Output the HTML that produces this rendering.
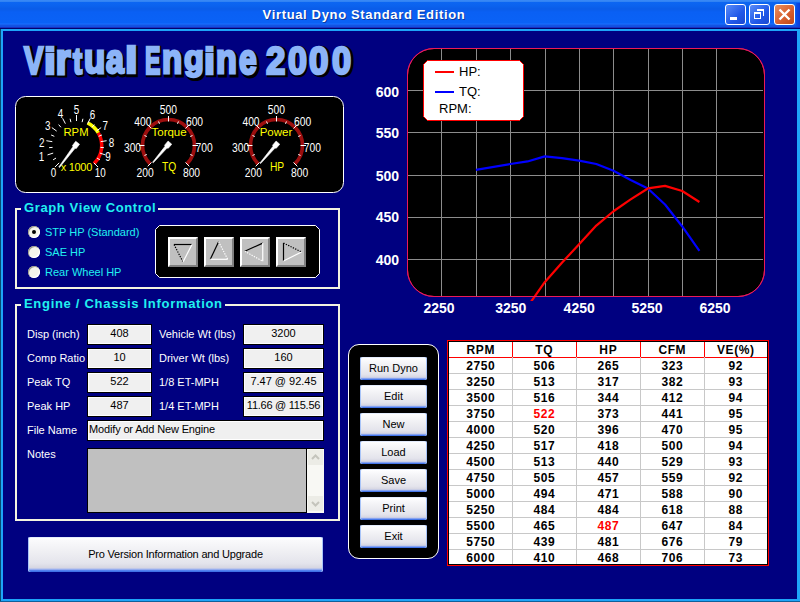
<!DOCTYPE html>
<html><head><meta charset="utf-8">
<style>
*{margin:0;padding:0;box-sizing:border-box}
html,body{width:800px;height:602px;overflow:hidden;background:#000080;font-family:"Liberation Sans",sans-serif}
.a{position:absolute}
#title{left:0;top:0;width:800px;height:29px;background:linear-gradient(#3a8af6 0,#2e80f2 2px,#0c66f2 2px,#0b62ee 6px,#0a5ce8 9px,#0a60f4 12px,#0a62f6 23px,#1a70ff 24px,#1454e4 25px,#1050e0 27px,#1a30c0 27px,#1a30c0 28px,#000070 28px)}
#ttext{left:0;top:7px;width:728px;text-align:center;color:#fff;font-weight:bold;font-size:13px;letter-spacing:0.65px;text-shadow:1px 1px 0 #0a3aa0}
.tb{width:21px;height:21px;top:4px;border:1px solid #fff;border-radius:3px;background:linear-gradient(135deg,#5a8cf8,#2058e8 60%,#1a48d0)}
.frame{background:#1ea4f8}
.lbl{position:absolute;color:#fff;font-size:11px;line-height:13px;white-space:nowrap}
.box{position:absolute;background:#f0f0f0;border:1px solid #000;box-shadow:inset 0 0 0 1px #fff;height:21px;font-size:11px;line-height:17px;text-align:center;color:#000;white-space:nowrap}
.gb{position:absolute;border:2px solid #f4f4e0}
.gbt{position:absolute;background:#000080;color:#20f0f0;font-weight:bold;font-size:13px;letter-spacing:0.62px;line-height:15px;padding:0 2px 0 3px;white-space:nowrap}
.radio{position:absolute;width:12px;height:12px;border-radius:50%;background:#f4f4ec;box-shadow:inset 1px 1px 0 #9a9a88, inset -1px -1px 0 #fff}
.rlbl{position:absolute;color:#20f0f0;font-size:11px;line-height:13px;white-space:nowrap}
.xb{position:absolute;width:67px;height:23px;border-radius:2px;background:linear-gradient(#c8d8fa 0,#ffffff 1px,#fafafc 3px,#eeeef2 45%,#e4e4ec 75%,#d6d6e2 88%,#a8b8f0 92%,#4c7ef0 96%,#3a6ae0 100%);box-shadow:inset 1px 0 0 #a8c4f8, inset -1px 0 0 #a8c4f8;font-size:11px;line-height:23px;text-align:center;color:#000}
.ab{position:absolute;top:237px;width:30px;height:30px;background:#c0c0c0;border-top:2px solid #fff;border-left:2px solid #fff;border-right:2px solid #808080;border-bottom:2px solid #808080}
.logo{font-size:38px;font-weight:bold;color:#8cb4f8;white-space:nowrap;-webkit-text-stroke:2.6px #8cb4f8;transform-origin:0 0;line-height:44px}
.sh{color:#000;-webkit-text-stroke:4.6px #000}
.al{position:absolute;color:#fff;font-weight:bold;font-size:14px;line-height:16px;white-space:nowrap}
.tc{position:absolute;height:16px;text-align:center;font-weight:bold;font-size:12px;letter-spacing:0.6px;text-indent:0.6px;line-height:18px;color:#000}
</style></head><body>
<!-- title bar -->
<div class="a" id="title"></div>
<div class="a" style="left:796px;top:3px;width:4px;height:24px;background:linear-gradient(90deg,#0a50e8,#0a3cd8)"></div>
<div class="a" id="ttext">Virtual Dyno Standard Edition</div>
<div class="a tb" style="left:725px"><div class="a" style="left:4px;top:12px;width:7px;height:3px;background:#fff"></div></div>
<div class="a tb" style="left:749px"><svg class="a" style="left:0;top:0" width="19" height="19"><path d="M7,4 H14 V11 H13 V6 H7 Z" fill="#fff"/><path d="M4,7 H11 V14 H4 Z M5,9 V13 H10 V9 Z" fill="#fff" fill-rule="evenodd"/></svg></div>
<div class="a tb" style="left:774px;background:linear-gradient(135deg,#e89060,#d86030 55%,#c04818)"><svg class="a" style="left:0;top:0" width="19" height="19"><path d="M4.5,4.5 L14.5,14.5 M14.5,4.5 L4.5,14.5" stroke="#fff" stroke-width="2.4"/></svg></div>
<!-- frame -->
<div class="a frame" style="left:1px;top:29px;width:798px;height:2px"></div>
<div class="a frame" style="left:1px;top:29px;width:2px;height:572px"></div>
<div class="a frame" style="left:797px;top:29px;width:3px;height:572px"></div>
<div class="a frame" style="left:1px;top:599px;width:799px;height:2px"></div>
<div class="a" style="left:0;top:29px;width:1px;height:573px;background:#0a4a70"></div>
<div class="a" style="left:0;top:601px;width:800px;height:1px;background:#10609a"></div>

<!-- logo -->
<div class="a logo sh" style="left:25.66px;top:39.26px;transform:scale(0.763,1.021)">V</div>
<div class="a logo sh" style="left:45.50px;top:41.32px;transform:scale(1.125,0.963)">i</div>
<div class="a logo sh" style="left:57.25px;top:36.09px;transform:scale(1.0,1.109)">r</div>
<div class="a logo sh" style="left:74.43px;top:40.19px;transform:scale(0.727,0.989)">t</div>
<div class="a logo sh" style="left:85.69px;top:37.71px;transform:scale(0.914,1.061)">u</div>
<div class="a logo sh" style="left:107.20px;top:37.71px;transform:scale(0.843,1.061)">a</div>
<div class="a logo sh" style="left:126.12px;top:40.92px;transform:scale(1.188,0.972)">l</div>
<div class="a logo sh" style="left:146.28px;top:39.26px;transform:scale(0.608,1.021)">E</div>
<div class="a logo sh" style="left:163.53px;top:36.87px;transform:scale(0.868,1.087)">n</div>
<div class="a logo sh" style="left:185.64px;top:39.76px;transform:scale(0.857,0.903)">g</div>
<div class="a logo sh" style="left:205.82px;top:41.42px;transform:scale(1.037,0.963)">i</div>
<div class="a logo sh" style="left:217.90px;top:37.60px;transform:scale(0.895,1.07)">n</div>
<div class="a logo sh" style="left:240.70px;top:36.74px;transform:scale(0.836,1.104)">e</div>
<div class="a logo sh" style="left:267.90px;top:39.11px;transform:scale(0.914,1.028)">2</div>
<div class="a logo sh" style="left:289.30px;top:39.11px;transform:scale(0.895,1.028)">0</div>
<div class="a logo sh" style="left:310.70px;top:39.11px;transform:scale(0.919,1.028)">0</div>
<div class="a logo sh" style="left:333.50px;top:39.38px;transform:scale(0.905,1.017)">0</div>
<div class="a logo" style="left:24.16px;top:37.76px;transform:scale(0.763,1.021)">V</div>
<div class="a logo" style="left:44.00px;top:39.82px;transform:scale(1.125,0.963)">i</div>
<div class="a logo" style="left:55.75px;top:34.59px;transform:scale(1.0,1.109)">r</div>
<div class="a logo" style="left:72.93px;top:38.69px;transform:scale(0.727,0.989)">t</div>
<div class="a logo" style="left:84.19px;top:36.21px;transform:scale(0.914,1.061)">u</div>
<div class="a logo" style="left:105.70px;top:36.21px;transform:scale(0.843,1.061)">a</div>
<div class="a logo" style="left:124.62px;top:39.42px;transform:scale(1.188,0.972)">l</div>
<div class="a logo" style="left:144.78px;top:37.76px;transform:scale(0.608,1.021)">E</div>
<div class="a logo" style="left:162.03px;top:35.37px;transform:scale(0.868,1.087)">n</div>
<div class="a logo" style="left:184.14px;top:38.26px;transform:scale(0.857,0.903)">g</div>
<div class="a logo" style="left:204.32px;top:39.92px;transform:scale(1.037,0.963)">i</div>
<div class="a logo" style="left:216.40px;top:36.10px;transform:scale(0.895,1.07)">n</div>
<div class="a logo" style="left:239.20px;top:35.24px;transform:scale(0.836,1.104)">e</div>
<div class="a logo" style="left:266.40px;top:37.61px;transform:scale(0.914,1.028)">2</div>
<div class="a logo" style="left:287.80px;top:37.61px;transform:scale(0.895,1.028)">0</div>
<div class="a logo" style="left:309.20px;top:37.61px;transform:scale(0.919,1.028)">0</div>
<div class="a logo" style="left:332.00px;top:37.88px;transform:scale(0.905,1.017)">0</div>

<!-- gauges panel -->
<svg class="a" style="left:0;top:0" width="350" height="200" font-family="Liberation Sans, sans-serif">
<rect x="15.5" y="96.5" width="328" height="96" rx="10" ry="10" fill="#000" stroke="#fff" stroke-width="1"/>
<path d="M87.55,122.85 A25.2,25.2 0 0 1 98.32,132.90" stroke="#ffff00" stroke-width="3.5" fill="none"/>
<path d="M98.32,132.90 A25.2,25.2 0 0 1 94.01,163.63" stroke="#ff0000" stroke-width="3.5" fill="none"/>
<line x1="59.18" y1="162.82" x2="54.93" y2="167.07" stroke="#fff" stroke-width="1" />
<line x1="56.04" y1="158.04" x2="53.05" y2="159.87" stroke="#fff" stroke-width="1" />
<line x1="53.20" y1="153.07" x2="47.49" y2="154.93" stroke="#fff" stroke-width="1" />
<line x1="52.57" y1="147.38" x2="49.08" y2="147.66" stroke="#fff" stroke-width="1" />
<line x1="52.30" y1="141.67" x2="46.38" y2="140.73" stroke="#fff" stroke-width="1" />
<line x1="54.33" y1="136.32" x2="51.09" y2="134.98" stroke="#fff" stroke-width="1" />
<line x1="56.68" y1="131.10" x2="51.82" y2="127.57" stroke="#fff" stroke-width="1" />
<line x1="60.91" y1="127.25" x2="58.64" y2="124.59" stroke="#fff" stroke-width="1" />
<line x1="65.38" y1="123.67" x2="62.65" y2="118.32" stroke="#fff" stroke-width="1" />
<line x1="70.90" y1="122.16" x2="70.08" y2="118.76" stroke="#fff" stroke-width="1" />
<line x1="76.50" y1="121.00" x2="76.50" y2="115.00" stroke="#fff" stroke-width="1" />
<line x1="82.10" y1="122.16" x2="82.92" y2="118.76" stroke="#fff" stroke-width="1" />
<line x1="87.62" y1="123.67" x2="90.35" y2="118.32" stroke="#fff" stroke-width="1" />
<line x1="92.09" y1="127.25" x2="94.36" y2="124.59" stroke="#fff" stroke-width="1" />
<line x1="96.32" y1="131.10" x2="101.18" y2="127.57" stroke="#fff" stroke-width="1" />
<line x1="98.67" y1="136.32" x2="101.91" y2="134.98" stroke="#fff" stroke-width="1" />
<line x1="100.70" y1="141.67" x2="106.62" y2="140.73" stroke="#fff" stroke-width="1" />
<line x1="100.43" y1="147.38" x2="103.92" y2="147.66" stroke="#fff" stroke-width="1" />
<line x1="99.80" y1="153.07" x2="105.51" y2="154.93" stroke="#fff" stroke-width="1" />
<line x1="96.96" y1="158.04" x2="99.95" y2="159.87" stroke="#fff" stroke-width="1" />
<line x1="93.82" y1="162.82" x2="98.07" y2="167.07" stroke="#fff" stroke-width="1" />
<text transform="translate(53.50,176.50) scale(0.82,1)" fill="#fff" font-size="12" text-anchor="middle" font-weight="normal" >0</text>
<text transform="translate(41.50,161.20) scale(0.82,1)" fill="#fff" font-size="12" text-anchor="middle" font-weight="normal" >1</text>
<text transform="translate(41.70,146.60) scale(0.82,1)" fill="#fff" font-size="12" text-anchor="middle" font-weight="normal" >2</text>
<text transform="translate(47.70,129.70) scale(0.82,1)" fill="#fff" font-size="12" text-anchor="middle" font-weight="normal" >3</text>
<text transform="translate(60.40,118.20) scale(0.82,1)" fill="#fff" font-size="12" text-anchor="middle" font-weight="normal" >4</text>
<text transform="translate(76.50,113.70) scale(0.82,1)" fill="#fff" font-size="12" text-anchor="middle" font-weight="normal" >5</text>
<text transform="translate(92.60,118.50) scale(0.82,1)" fill="#fff" font-size="12" text-anchor="middle" font-weight="normal" >6</text>
<text transform="translate(105.30,129.50) scale(0.82,1)" fill="#fff" font-size="12" text-anchor="middle" font-weight="normal" >7</text>
<text transform="translate(111.60,146.60) scale(0.82,1)" fill="#fff" font-size="12" text-anchor="middle" font-weight="normal" >8</text>
<text transform="translate(108.00,161.20) scale(0.82,1)" fill="#fff" font-size="12" text-anchor="middle" font-weight="normal" >9</text>
<text transform="translate(100.30,176.50) scale(0.82,1)" fill="#fff" font-size="12" text-anchor="middle" font-weight="normal" >10</text>
<text transform="translate(76.00,135.80) scale(0.98,1)" fill="#ffff00" font-size="11.5" text-anchor="middle" font-weight="normal" >RPM</text>
<text x="76.4" y="170.7" fill="#ffff00" font-size="11" text-anchor="middle" font-weight="normal" letter-spacing="-0.3">x 1000</text>
<path d="M75.71,141.30 L72.46,145.61 L72.93,146.72 L58.79,166.99 L59.51,167.53 L75.09,148.35 L76.29,148.50 L79.54,144.19Z" fill="#fff" stroke="#fff" stroke-width="0.6" stroke-linejoin="round"/>
<path d="M150.12,163.88 A26,26 0 1 1 186.88,163.88" stroke="#9c0e0e" stroke-width="3.6" fill="none"/>
<line x1="151.53" y1="162.47" x2="147.64" y2="166.36" stroke="#fff" stroke-width="1" />
<line x1="146.79" y1="154.49" x2="144.48" y2="155.45" stroke="#fff" stroke-width="1" />
<line x1="144.50" y1="145.50" x2="139.00" y2="145.50" stroke="#fff" stroke-width="1" />
<line x1="146.79" y1="136.51" x2="144.48" y2="135.55" stroke="#fff" stroke-width="1" />
<line x1="151.53" y1="128.53" x2="147.64" y2="124.64" stroke="#fff" stroke-width="1" />
<line x1="159.51" y1="123.79" x2="158.55" y2="121.48" stroke="#fff" stroke-width="1" />
<line x1="168.50" y1="121.50" x2="168.50" y2="116.00" stroke="#fff" stroke-width="1" />
<line x1="177.49" y1="123.79" x2="178.45" y2="121.48" stroke="#fff" stroke-width="1" />
<line x1="185.47" y1="128.53" x2="189.36" y2="124.64" stroke="#fff" stroke-width="1" />
<line x1="190.21" y1="136.51" x2="192.52" y2="135.55" stroke="#fff" stroke-width="1" />
<line x1="192.50" y1="145.50" x2="198.00" y2="145.50" stroke="#fff" stroke-width="1" />
<line x1="190.21" y1="154.49" x2="192.52" y2="155.45" stroke="#fff" stroke-width="1" />
<line x1="185.47" y1="162.47" x2="189.36" y2="166.36" stroke="#fff" stroke-width="1" />
<text transform="translate(145.20,177.00) scale(0.86,1)" fill="#fff" font-size="12" text-anchor="middle" font-weight="normal" >200</text>
<text transform="translate(132.50,152.00) scale(0.86,1)" fill="#fff" font-size="12" text-anchor="middle" font-weight="normal" >300</text>
<text transform="translate(142.90,126.20) scale(0.86,1)" fill="#fff" font-size="12" text-anchor="middle" font-weight="normal" >400</text>
<text transform="translate(168.30,113.60) scale(0.86,1)" fill="#fff" font-size="12" text-anchor="middle" font-weight="normal" >500</text>
<text transform="translate(194.50,126.20) scale(0.86,1)" fill="#fff" font-size="12" text-anchor="middle" font-weight="normal" >600</text>
<text transform="translate(204.20,152.00) scale(0.86,1)" fill="#fff" font-size="12" text-anchor="middle" font-weight="normal" >700</text>
<text transform="translate(191.50,177.00) scale(0.86,1)" fill="#fff" font-size="12" text-anchor="middle" font-weight="normal" >800</text>
<text x="169.1" y="135.9" fill="#ffff00" font-size="11.5" text-anchor="middle" font-weight="normal" >Torque</text>
<text transform="translate(169.00,171.00) scale(0.82,1)" fill="#ffff00" font-size="12.5" text-anchor="middle" font-weight="normal" >TQ</text>
<path d="M168.10,141.07 L164.60,145.17 L165.01,146.31 L152.57,162.26 L153.26,162.84 L167.06,148.07 L168.25,148.29 L171.75,144.19Z" fill="#fff" stroke="#fff" stroke-width="0.6" stroke-linejoin="round"/>
<path d="M258.12,163.88 A26,26 0 1 1 294.88,163.88" stroke="#9c0e0e" stroke-width="3.6" fill="none"/>
<line x1="259.53" y1="162.47" x2="255.64" y2="166.36" stroke="#fff" stroke-width="1" />
<line x1="254.79" y1="154.49" x2="252.48" y2="155.45" stroke="#fff" stroke-width="1" />
<line x1="252.50" y1="145.50" x2="247.00" y2="145.50" stroke="#fff" stroke-width="1" />
<line x1="254.79" y1="136.51" x2="252.48" y2="135.55" stroke="#fff" stroke-width="1" />
<line x1="259.53" y1="128.53" x2="255.64" y2="124.64" stroke="#fff" stroke-width="1" />
<line x1="267.51" y1="123.79" x2="266.55" y2="121.48" stroke="#fff" stroke-width="1" />
<line x1="276.50" y1="121.50" x2="276.50" y2="116.00" stroke="#fff" stroke-width="1" />
<line x1="285.49" y1="123.79" x2="286.45" y2="121.48" stroke="#fff" stroke-width="1" />
<line x1="293.47" y1="128.53" x2="297.36" y2="124.64" stroke="#fff" stroke-width="1" />
<line x1="298.21" y1="136.51" x2="300.52" y2="135.55" stroke="#fff" stroke-width="1" />
<line x1="300.50" y1="145.50" x2="306.00" y2="145.50" stroke="#fff" stroke-width="1" />
<line x1="298.21" y1="154.49" x2="300.52" y2="155.45" stroke="#fff" stroke-width="1" />
<line x1="293.47" y1="162.47" x2="297.36" y2="166.36" stroke="#fff" stroke-width="1" />
<text transform="translate(253.30,177.00) scale(0.86,1)" fill="#fff" font-size="12" text-anchor="middle" font-weight="normal" >200</text>
<text transform="translate(240.60,152.00) scale(0.86,1)" fill="#fff" font-size="12" text-anchor="middle" font-weight="normal" >300</text>
<text transform="translate(251.00,126.20) scale(0.86,1)" fill="#fff" font-size="12" text-anchor="middle" font-weight="normal" >400</text>
<text transform="translate(276.40,113.60) scale(0.86,1)" fill="#fff" font-size="12" text-anchor="middle" font-weight="normal" >500</text>
<text transform="translate(302.60,126.20) scale(0.86,1)" fill="#fff" font-size="12" text-anchor="middle" font-weight="normal" >600</text>
<text transform="translate(312.30,152.00) scale(0.86,1)" fill="#fff" font-size="12" text-anchor="middle" font-weight="normal" >700</text>
<text transform="translate(299.60,177.00) scale(0.86,1)" fill="#fff" font-size="12" text-anchor="middle" font-weight="normal" >800</text>
<text x="276.0" y="135.9" fill="#ffff00" font-size="11.5" text-anchor="middle" font-weight="normal" >Power</text>
<text transform="translate(277.00,171.00) scale(0.82,1)" fill="#ffff00" font-size="12.5" text-anchor="middle" font-weight="normal" >HP</text>
<path d="M276.10,141.07 L272.60,145.17 L273.01,146.31 L259.92,163.02 L260.61,163.60 L275.06,148.07 L276.25,148.29 L279.75,144.19Z" fill="#fff" stroke="#fff" stroke-width="0.6" stroke-linejoin="round"/>
</svg>

<!-- Graph view control -->
<div class="gb" style="left:15px;top:208px;width:325px;height:81px"></div>
<div class="gbt" style="left:21px;top:200px">Graph View Control</div>
<div class="radio" style="left:28px;top:226px"><div class="a" style="left:4px;top:4px;width:4px;height:4px;border-radius:50%;background:#000"></div></div>
<div class="radio" style="left:28px;top:246px"></div>
<div class="radio" style="left:28px;top:266px"></div>
<div class="rlbl" style="left:45px;top:226px">STP HP (Standard)</div>
<div class="rlbl" style="left:45px;top:246px">SAE HP</div>
<div class="rlbl" style="left:45px;top:266px">Rear Wheel HP</div>
<svg class="a" style="left:150px;top:220px" width="180" height="65">
<path d="M9.5,5.5 L165.5,5.5 L169.5,9.5 L169.5,53.5 L165.5,57.5 L9.5,57.5 L5.5,53.5 L5.5,9.5 Z" fill="#000" stroke="#fff"/>
</svg>
<div class="ab" style="left:168px"></div>
<div class="ab" style="left:204px"></div>
<div class="ab" style="left:240px"></div>
<div class="ab" style="left:276px"></div>
<svg class="a" style="left:150px;top:220px" width="180" height="65">
<path d="M24,24.5 L42,24.5" stroke="#000" stroke-width="1.2"/>
<path d="M24,24.5 L33,42" stroke="#000" stroke-width="1.2" stroke-dasharray="1.3,1.3"/>
<path d="M42,24.5 L33,42" stroke="#fff" stroke-width="1.2"/>
<path d="M68.6,21.7 L60.3,39.3" stroke="#000" stroke-width="1.2"/>
<path d="M60.3,39.3 L77.7,39.3" stroke="#fff" stroke-width="1.2"/>
<path d="M68.6,21.7 L77.7,39.3" stroke="#fff" stroke-width="1.2" stroke-dasharray="1.3,1.3"/>
<path d="M94.75,31.25 L112.75,23.1" stroke="#000" stroke-width="1.2"/>
<path d="M112.75,23.1 L112.75,41.25" stroke="#fff" stroke-width="1.2"/>
<path d="M94.75,31.25 L112.75,41.25" stroke="#fff" stroke-width="1.2" stroke-dasharray="1.3,1.3"/>
<path d="M133.5,23 L133.5,41" stroke="#000" stroke-width="1.2"/>
<path d="M133.5,23 L151.5,32" stroke="#000" stroke-width="1.2" stroke-dasharray="1.3,1.3"/>
<path d="M133.5,41 L151.5,32" stroke="#fff" stroke-width="1.2"/>
</svg>

<!-- Engine / chassis -->
<div class="gb" style="left:15px;top:304px;width:325px;height:217px"></div>
<div class="gbt" style="left:21px;top:296px;letter-spacing:0.7px">Engine / Chassis Information</div>
<div class="lbl" style="left:27px;top:328px">Disp (inch)</div>
<div class="lbl" style="left:27px;top:352px">Comp Ratio</div>
<div class="lbl" style="left:27px;top:376px">Peak TQ</div>
<div class="lbl" style="left:27px;top:400px">Peak HP</div>
<div class="lbl" style="left:159px;top:328px">Vehicle Wt (lbs)</div>
<div class="lbl" style="left:159px;top:352px">Driver Wt (lbs)</div>
<div class="lbl" style="left:159px;top:376px">1/8 ET-MPH</div>
<div class="lbl" style="left:159px;top:400px">1/4 ET-MPH</div>
<div class="box" style="left:87px;top:324px;width:65px">408</div>
<div class="box" style="left:87px;top:348px;width:65px">10</div>
<div class="box" style="left:87px;top:372px;width:65px">522</div>
<div class="box" style="left:87px;top:396px;width:65px">487</div>
<div class="box" style="left:243px;top:324px;width:81px">3200</div>
<div class="box" style="left:243px;top:348px;width:81px">160</div>
<div class="box" style="left:243px;top:372px;width:81px">7.47 @ 92.45</div>
<div class="box" style="left:243px;top:396px;width:81px;letter-spacing:-0.25px">11.66 @ 115.56</div>
<div class="lbl" style="left:27px;top:424px">File Name</div>
<div class="box" style="left:87px;top:420px;width:237px;text-align:left;padding-left:1px;letter-spacing:-0.15px">Modify or Add New Engine</div>
<div class="lbl" style="left:27px;top:448px">Notes</div>
<div class="a" style="left:87px;top:448px;width:220px;height:65px;border:1px solid #000;background:#c0c0c0"></div>
<div class="a" style="left:307px;top:448px;width:17px;height:1px;background:#000"></div>
<div class="a" style="left:307px;top:449px;width:17px;height:64px;background:#f8f8f4"></div>
<div class="a" style="left:308px;top:450px;width:15px;height:15px;background:#ecece6"></div>
<div class="a" style="left:308px;top:496px;width:15px;height:15px;background:#ecece6"></div>
<svg class="a" style="left:307px;top:449px" width="17" height="64"><path d="M5,10 L8.5,6.5 L12,10" stroke="#c4c4bc" stroke-width="2" fill="none"/><path d="M5,53 L8.5,56.5 L12,53" stroke="#c4c4bc" stroke-width="2" fill="none"/></svg>

<!-- Pro button -->
<div class="xb" style="left:28px;top:537px;width:295px;height:35px;line-height:35px;letter-spacing:-0.2px">Pro Version Information and Upgrade</div>

<!-- button panel -->
<div class="a" style="left:348px;top:344px;width:91px;height:215px;border:1px solid #fff;border-radius:11px;background:#000"></div>
<div class="xb" style="left:360px;top:357px">Run Dyno</div>
<div class="xb" style="left:360px;top:385px">Edit</div>
<div class="xb" style="left:360px;top:413px">New</div>
<div class="xb" style="left:360px;top:441px">Load</div>
<div class="xb" style="left:360px;top:469px">Save</div>
<div class="xb" style="left:360px;top:497px">Print</div>
<div class="xb" style="left:360px;top:525px">Exit</div>

<!-- table -->
<div class="a" style="left:447px;top:340px;width:322px;height:226px;border:1px solid #ff0000;background:#000"></div>
<div class="a" style="left:449px;top:342px;width:318px;height:222px;background:#fff"></div>
<div class="a" style="left:449px;top:357px;width:318px;height:1px;background:#ff0000"></div>
<div class="tc" style="left:449px;top:341px;width:63px">RPM</div>
<div class="tc" style="left:512px;top:341px;width:64px">TQ</div>
<div class="tc" style="left:576px;top:341px;width:64px">HP</div>
<div class="tc" style="left:640px;top:341px;width:64px">CFM</div>
<div class="tc" style="left:704px;top:341px;width:63px">VE(%)</div>
<div class="tc" style="left:449px;top:357px;width:63px">2750</div>
<div class="tc" style="left:512px;top:357px;width:64px">506</div>
<div class="tc" style="left:576px;top:357px;width:64px">265</div>
<div class="tc" style="left:640px;top:357px;width:64px">323</div>
<div class="tc" style="left:704px;top:357px;width:63px">92</div>
<div class="tc" style="left:449px;top:373px;width:63px">3250</div>
<div class="tc" style="left:512px;top:373px;width:64px">513</div>
<div class="tc" style="left:576px;top:373px;width:64px">317</div>
<div class="tc" style="left:640px;top:373px;width:64px">382</div>
<div class="tc" style="left:704px;top:373px;width:63px">93</div>
<div class="tc" style="left:449px;top:389px;width:63px">3500</div>
<div class="tc" style="left:512px;top:389px;width:64px">516</div>
<div class="tc" style="left:576px;top:389px;width:64px">344</div>
<div class="tc" style="left:640px;top:389px;width:64px">412</div>
<div class="tc" style="left:704px;top:389px;width:63px">94</div>
<div class="tc" style="left:449px;top:405px;width:63px">3750</div>
<div class="tc" style="left:512px;top:405px;width:64px;color:#ff0000">522</div>
<div class="tc" style="left:576px;top:405px;width:64px">373</div>
<div class="tc" style="left:640px;top:405px;width:64px">441</div>
<div class="tc" style="left:704px;top:405px;width:63px">95</div>
<div class="tc" style="left:449px;top:421px;width:63px">4000</div>
<div class="tc" style="left:512px;top:421px;width:64px">520</div>
<div class="tc" style="left:576px;top:421px;width:64px">396</div>
<div class="tc" style="left:640px;top:421px;width:64px">470</div>
<div class="tc" style="left:704px;top:421px;width:63px">95</div>
<div class="tc" style="left:449px;top:437px;width:63px">4250</div>
<div class="tc" style="left:512px;top:437px;width:64px">517</div>
<div class="tc" style="left:576px;top:437px;width:64px">418</div>
<div class="tc" style="left:640px;top:437px;width:64px">500</div>
<div class="tc" style="left:704px;top:437px;width:63px">94</div>
<div class="tc" style="left:449px;top:453px;width:63px">4500</div>
<div class="tc" style="left:512px;top:453px;width:64px">513</div>
<div class="tc" style="left:576px;top:453px;width:64px">440</div>
<div class="tc" style="left:640px;top:453px;width:64px">529</div>
<div class="tc" style="left:704px;top:453px;width:63px">93</div>
<div class="tc" style="left:449px;top:469px;width:63px">4750</div>
<div class="tc" style="left:512px;top:469px;width:64px">505</div>
<div class="tc" style="left:576px;top:469px;width:64px">457</div>
<div class="tc" style="left:640px;top:469px;width:64px">559</div>
<div class="tc" style="left:704px;top:469px;width:63px">92</div>
<div class="tc" style="left:449px;top:485px;width:63px">5000</div>
<div class="tc" style="left:512px;top:485px;width:64px">494</div>
<div class="tc" style="left:576px;top:485px;width:64px">471</div>
<div class="tc" style="left:640px;top:485px;width:64px">588</div>
<div class="tc" style="left:704px;top:485px;width:63px">90</div>
<div class="tc" style="left:449px;top:501px;width:63px">5250</div>
<div class="tc" style="left:512px;top:501px;width:64px">484</div>
<div class="tc" style="left:576px;top:501px;width:64px">484</div>
<div class="tc" style="left:640px;top:501px;width:64px">618</div>
<div class="tc" style="left:704px;top:501px;width:63px">88</div>
<div class="tc" style="left:449px;top:517px;width:63px">5500</div>
<div class="tc" style="left:512px;top:517px;width:64px">465</div>
<div class="tc" style="left:576px;top:517px;width:64px;color:#ff0000">487</div>
<div class="tc" style="left:640px;top:517px;width:64px">647</div>
<div class="tc" style="left:704px;top:517px;width:63px">84</div>
<div class="tc" style="left:449px;top:533px;width:63px">5750</div>
<div class="tc" style="left:512px;top:533px;width:64px">439</div>
<div class="tc" style="left:576px;top:533px;width:64px">481</div>
<div class="tc" style="left:640px;top:533px;width:64px">676</div>
<div class="tc" style="left:704px;top:533px;width:63px">79</div>
<div class="tc" style="left:449px;top:549px;width:63px">6000</div>
<div class="tc" style="left:512px;top:549px;width:64px">410</div>
<div class="tc" style="left:576px;top:549px;width:64px">468</div>
<div class="tc" style="left:640px;top:549px;width:64px">706</div>
<div class="tc" style="left:704px;top:549px;width:63px">73</div>
<div style="position:absolute;left:449px;top:373px;width:318px;height:1px;background:#c8c8c8"></div>
<div style="position:absolute;left:449px;top:389px;width:318px;height:1px;background:#c8c8c8"></div>
<div style="position:absolute;left:449px;top:405px;width:318px;height:1px;background:#c8c8c8"></div>
<div style="position:absolute;left:449px;top:421px;width:318px;height:1px;background:#c8c8c8"></div>
<div style="position:absolute;left:449px;top:437px;width:318px;height:1px;background:#c8c8c8"></div>
<div style="position:absolute;left:449px;top:453px;width:318px;height:1px;background:#c8c8c8"></div>
<div style="position:absolute;left:449px;top:469px;width:318px;height:1px;background:#c8c8c8"></div>
<div style="position:absolute;left:449px;top:485px;width:318px;height:1px;background:#c8c8c8"></div>
<div style="position:absolute;left:449px;top:501px;width:318px;height:1px;background:#c8c8c8"></div>
<div style="position:absolute;left:449px;top:517px;width:318px;height:1px;background:#c8c8c8"></div>
<div style="position:absolute;left:449px;top:533px;width:318px;height:1px;background:#c8c8c8"></div>
<div style="position:absolute;left:449px;top:549px;width:318px;height:1px;background:#c8c8c8"></div>
<div style="position:absolute;left:512px;top:357px;width:1px;height:207px;background:#c8c8c8"></div>
<div style="position:absolute;left:512px;top:342px;width:1px;height:15px;background:#ff0000"></div>
<div style="position:absolute;left:576px;top:357px;width:1px;height:207px;background:#c8c8c8"></div>
<div style="position:absolute;left:576px;top:342px;width:1px;height:15px;background:#ff0000"></div>
<div style="position:absolute;left:640px;top:357px;width:1px;height:207px;background:#c8c8c8"></div>
<div style="position:absolute;left:640px;top:342px;width:1px;height:15px;background:#ff0000"></div>
<div style="position:absolute;left:704px;top:357px;width:1px;height:207px;background:#c8c8c8"></div>
<div style="position:absolute;left:704px;top:342px;width:1px;height:15px;background:#ff0000"></div>

<!-- chart -->
<div class="a" style="left:407px;top:48px;width:358px;height:249px;border:1px solid #ea1a5a;border-radius:27px;background:#000"></div>
<svg class="a" style="left:0;top:0" width="800" height="320">
<defs><clipPath id="pc"><rect x="408" y="49" width="356" height="252"/></clipPath></defs>
<g clip-path="url(#pc)">
<line x1="441.50" y1="48.00" x2="441.50" y2="297.00" stroke="#8c8c8c" stroke-width="1" />
<line x1="476.50" y1="48.00" x2="476.50" y2="297.00" stroke="#8c8c8c" stroke-width="1" />
<line x1="510.50" y1="48.00" x2="510.50" y2="297.00" stroke="#8c8c8c" stroke-width="1" />
<line x1="545.50" y1="48.00" x2="545.50" y2="297.00" stroke="#8c8c8c" stroke-width="1" />
<line x1="579.50" y1="48.00" x2="579.50" y2="297.00" stroke="#8c8c8c" stroke-width="1" />
<line x1="613.50" y1="48.00" x2="613.50" y2="297.00" stroke="#8c8c8c" stroke-width="1" />
<line x1="648.50" y1="48.00" x2="648.50" y2="297.00" stroke="#8c8c8c" stroke-width="1" />
<line x1="682.50" y1="48.00" x2="682.50" y2="297.00" stroke="#8c8c8c" stroke-width="1" />
<line x1="716.50" y1="48.00" x2="716.50" y2="297.00" stroke="#8c8c8c" stroke-width="1" />
<line x1="408.00" y1="90.50" x2="763.00" y2="90.50" stroke="#8c8c8c" stroke-width="1" />
<line x1="408.00" y1="132.50" x2="763.00" y2="132.50" stroke="#8c8c8c" stroke-width="1" />
<line x1="408.00" y1="175.50" x2="763.00" y2="175.50" stroke="#8c8c8c" stroke-width="1" />
<line x1="408.00" y1="217.50" x2="763.00" y2="217.50" stroke="#8c8c8c" stroke-width="1" />
<line x1="408.00" y1="259.50" x2="763.00" y2="259.50" stroke="#8c8c8c" stroke-width="1" />
<polyline points="475.98,169.88 510.35,163.97 527.54,161.44 544.73,156.37 561.91,158.06 579.10,160.59 596.29,163.97 613.48,170.73 630.66,180.02 647.85,188.46 665.04,204.51 682.23,226.46 699.41,250.96" stroke="#0000ff" stroke-width="2.2" fill="none" stroke-linejoin="round"/>
<polyline points="475.98,373.41 510.35,329.49 527.54,306.69 544.73,282.20 561.91,262.78 579.10,244.20 596.29,225.62 613.48,211.26 630.66,199.44 647.85,188.46 665.04,185.93 682.23,191.00 699.41,201.97" stroke="#ff0000" stroke-width="2.2" fill="none" stroke-linejoin="round"/>
</g>
</svg>
<div class="a" style="left:407px;top:48px;width:358px;height:249px;border:1px solid #ea1a5a;border-radius:27px"></div>
<!-- legend -->
<svg class="a" style="left:420px;top:58px" width="110" height="66">
<path d="M7.5,2.5 L99.5,2.5 L103.5,6.5 L103.5,58.5 L99.5,62.5 L7.5,62.5 L3.5,58.5 L3.5,6.5 Z" fill="#fff" stroke="#ff0000"/>
<line x1="15" y1="14" x2="34" y2="14" stroke="#ff0000" stroke-width="2"/>
<line x1="15" y1="34" x2="34" y2="34" stroke="#0000ff" stroke-width="2"/>
</svg>
<div class="a" style="left:459px;top:64px;font-size:13px;line-height:15px;color:#000">HP:</div>
<div class="a" style="left:459px;top:84px;font-size:13px;line-height:15px;color:#000">TQ:</div>
<div class="a" style="left:439px;top:101px;font-size:13px;line-height:15px;color:#000">RPM:</div>
<!-- axis labels -->
<div class="al" style="left:359px;top:84.2px;width:40px;text-align:right">600</div>
<div class="al" style="left:359px;top:125.2px;width:40px;text-align:right">550</div>
<div class="al" style="left:359px;top:168.0px;width:40px;text-align:right">500</div>
<div class="al" style="left:359px;top:208.7px;width:40px;text-align:right">450</div>
<div class="al" style="left:359px;top:251.6px;width:40px;text-align:right">400</div>
<div class="al" style="left:409.1px;top:299.5px;width:60px;text-align:center">2250</div>
<div class="al" style="left:480.8px;top:299.5px;width:60px;text-align:center">3250</div>
<div class="al" style="left:549.2px;top:299.5px;width:60px;text-align:center">4250</div>
<div class="al" style="left:617.0px;top:299.5px;width:60px;text-align:center">5250</div>
<div class="al" style="left:685.0px;top:299.5px;width:60px;text-align:center">6250</div>
</body></html>
